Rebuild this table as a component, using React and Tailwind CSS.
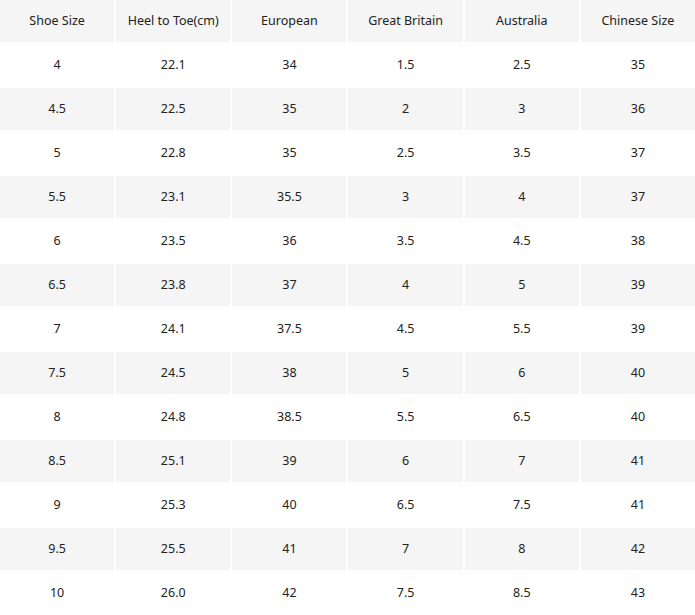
const header = ["Shoe Size", "Heel to Toe(cm)", "European", "Great Britain", "Australia", "Chinese Size"];
const rows = [
  ["4", "22.1", "34", "1.5", "2.5", "35"],
  ["4.5", "22.5", "35", "2", "3", "36"],
  ["5", "22.8", "35", "2.5", "3.5", "37"],
  ["5.5", "23.1", "35.5", "3", "4", "37"],
  ["6", "23.5", "36", "3.5", "4.5", "38"],
  ["6.5", "23.8", "37", "4", "5", "39"],
  ["7", "24.1", "37.5", "4.5", "5.5", "39"],
  ["7.5", "24.5", "38", "5", "6", "40"],
  ["8", "24.8", "38.5", "5.5", "6.5", "40"],
  ["8.5", "25.1", "39", "6", "7", "41"],
  ["9", "25.3", "40", "6.5", "7.5", "41"],
  ["9.5", "25.5", "41", "7", "8", "42"],
  ["10", "26.0", "42", "7.5", "8.5", "43"],
];

export default function App() {
  const all = [header, ...rows];
  return (
    <div className="w-[695px] h-[615px] overflow-hidden bg-white text-[#222] text-[12.5px]" style={{ fontFamily: '"Noto Sans", sans-serif' }}>
      <div className="flex flex-col gap-[2px]">
        {all.map((r, i) => (
          <div key={i} className="grid grid-cols-6 gap-[2px]">
            {r.map((c, j) => (
              <div
                key={j}
                className={`h-[42px] flex items-center justify-center ${i % 2 === 0 ? "bg-[#f5f5f5]" : "bg-white"}`}
              >
                {c}
              </div>
            ))}
          </div>
        ))}
      </div>
    </div>
  );
}
